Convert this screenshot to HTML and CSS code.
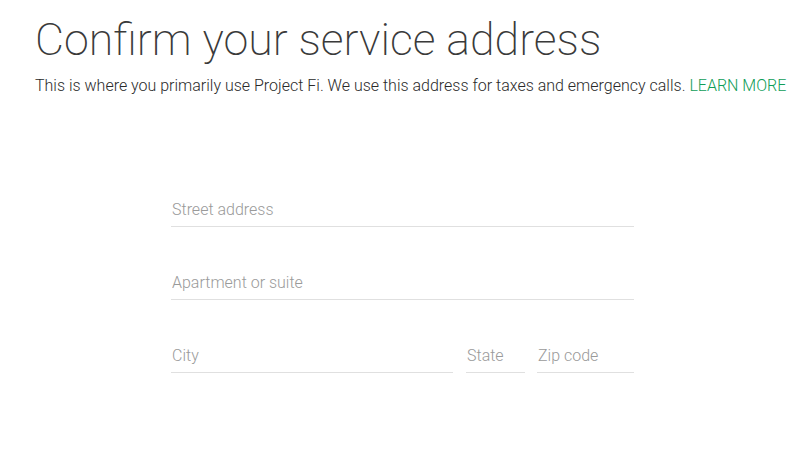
FILE: index.html
```html
<!DOCTYPE html>
<html>
<head>
<meta charset="utf-8">
<link rel="stylesheet" href="styles.css">
</head>
<body>
<div class="page">
  <h1 class="title">Confirm your service address</h1>
  <p class="lead">This is where you primarily use Project Fi. We use this address for taxes and emergency calls. <a class="link" href="#">LEARN MORE</a></p>
  <form class="form">
    <div class="row">
      <label class="field field-full"><input class="input" placeholder="Street address"></label>
    </div>
    <div class="row">
      <label class="field field-full"><input class="input" placeholder="Apartment or suite"></label>
    </div>
    <div class="row">
      <label class="field field-city"><input class="input" placeholder="City"></label>
      <label class="field field-state"><input class="input" placeholder="State"></label>
      <label class="field field-zip"><input class="input" placeholder="Zip code"></label>
    </div>
  </form>
</div>
</body>
</html>
```

FILE: styles.css
```css
html, body {
  margin: 0;
  padding: 0;
  background: #fff;
}
body {
  font-family: Roboto, "Noto Sans", sans-serif;
  color: #333;
}
.page {
  padding: 13px 0 0 35px;
  white-space: nowrap;
}
.title {
  margin: 0;
  font-family: Roboto, sans-serif;
  font-size: 44.7px;
  font-weight: 200;
  line-height: 55px;
  color: #3a3a3a;
}
.lead {
  margin: 8px 0 0;
  font-family: "Roboto Light", Roboto, sans-serif;
  font-size: 16px;
  font-weight: 300;
  line-height: 20px;
  color: #2a2a2a;
}
.link {
  color: #0f9d58;
  text-decoration: none;
}
.form {
  margin: 98px 0 0 136px;
  width: 463px;
}
.row {
  display: flex;
  gap: 12px;
  margin-bottom: 40px;
}
.field {
  display: block;
  border-bottom: 1px solid #e0e0e0;
}
.field-full { width: 463px; }
.field-city { width: 282px; margin-right: 1px; }
.field-state { width: 59px; }
.field-zip { width: 97px; }
.input {
  display: block;
  width: 100%;
  box-sizing: border-box;
  border: 0;
  outline: 0;
  padding: 0 0 2px 1px;
  margin: 0;
  height: 32px;
  font-family: "Roboto Light", Roboto, sans-serif;
  font-size: 16px;
  font-weight: 300;
  color: #333;
  background: transparent;
}
.input::placeholder {
  color: #9a9a9a;
  opacity: 1;
}
```
